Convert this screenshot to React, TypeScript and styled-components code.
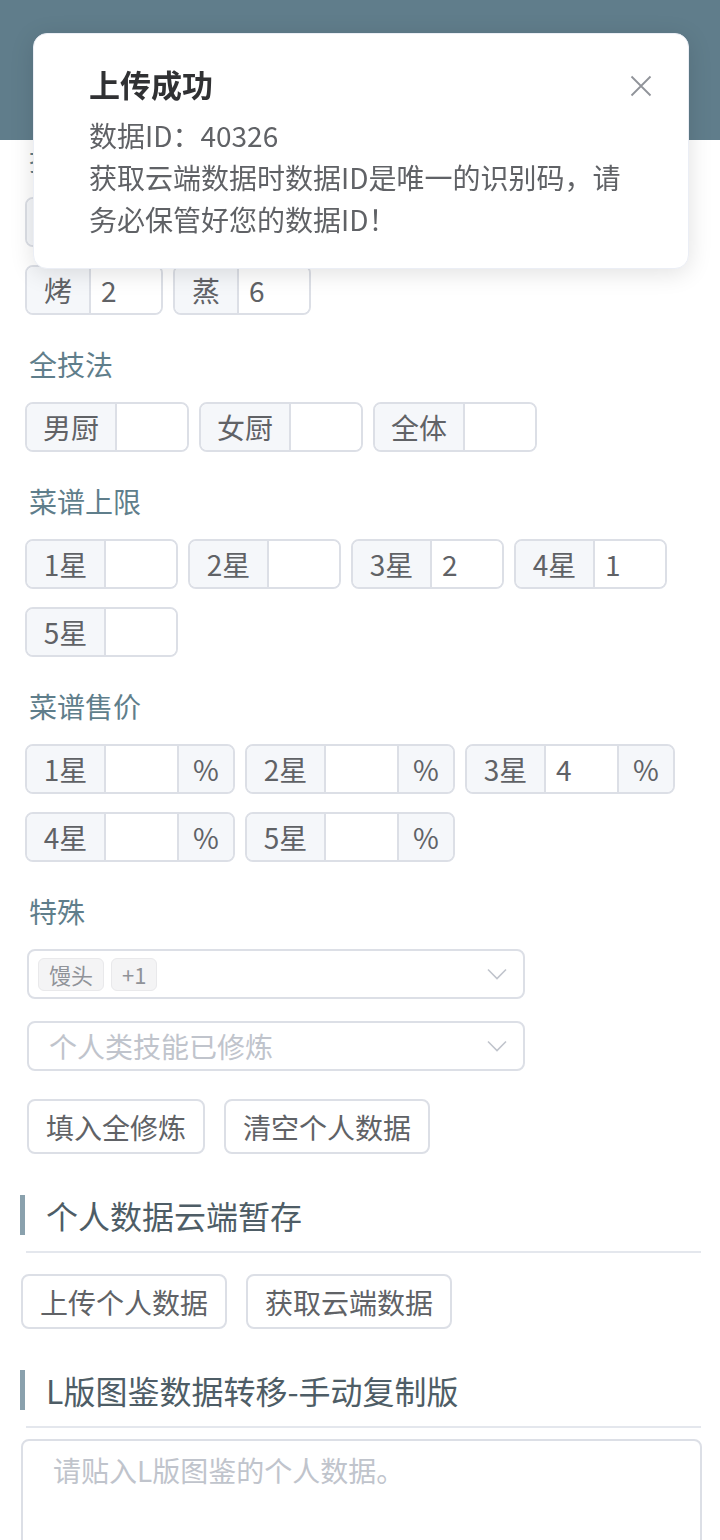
import React from "react";
import styled, { createGlobalStyle } from "styled-components";

const GlobalStyle = createGlobalStyle`
  body {
    margin: 0;
    background: #ffffff;
    font-family: "Noto Sans CJK SC", "Noto Sans", sans-serif;
    color: #606266;
  }
`;

type Field = { name: string; value?: string };

const skills: Field[] = [
  { name: "炒", value: "3" },
  { name: "煮", value: "1" },
  { name: "切", value: "4" },
  { name: "炸", value: "2" },
  { name: "烤", value: "2" },
  { name: "蒸", value: "6" },
];

const allSkills: Field[] = [{ name: "男厨" }, { name: "女厨" }, { name: "全体" }];

const limits: Field[] = [
  { name: "1星" },
  { name: "2星" },
  { name: "3星", value: "2" },
  { name: "4星", value: "1" },
  { name: "5星" },
];

const prices: Field[] = [
  { name: "1星" },
  { name: "2星" },
  { name: "3星", value: "4" },
  { name: "4星" },
  { name: "5星" },
];

const ChevronDown = () => (
  <svg width="20" height="12" viewBox="0 0 20 12" fill="none">
    <polyline points="1,1.5 10,10.5 19,1.5" stroke="#c0c4cc" strokeWidth="1.6" />
  </svg>
);

const CloseIcon = () => (
  <svg width="22" height="22" viewBox="0 0 22 22" fill="none">
    <path d="M1.5 1.5 L20.5 20.5 M20.5 1.5 L1.5 20.5" stroke="#909399" strokeWidth="1.8" />
  </svg>
);

const FieldRow = ({
  items,
  width,
  label,
  suffix,
}: {
  items: Field[];
  width: number;
  label: number;
  suffix?: string;
}) => (
  <Row>
    {items.map((s) => (
      <InputGroup key={s.name} $w={width}>
        <Prepend $w={label}>{s.name}</Prepend>
        <Input defaultValue={s.value} />
        {suffix && <Append>{suffix}</Append>}
      </InputGroup>
    ))}
  </Row>
);

const App = () => {
  return (
    <>
      <GlobalStyle />
      <Header />
      <Form>
        <Label $flush>技法</Label>
        <FieldRow items={skills} width={138} label={64} />

        <Label>全技法</Label>
        <FieldRow items={allSkills} width={164} label={90} />

        <Label>菜谱上限</Label>
        <FieldRow items={limits} width={153} label={79} />

        <Label>菜谱售价</Label>
        <FieldRow items={prices} width={210} label={79} suffix="%" />

        <Label>特殊</Label>
        <Select>
          <Tags>
            <Tag>馒头</Tag>
            <Tag>+1</Tag>
          </Tags>
          <ChevronDown />
        </Select>
        <Select $gap>
          <Placeholder>个人类技能已修炼</Placeholder>
          <ChevronDown />
        </Select>
        <ButtonBar $top={28}>
          <Button>填入全修炼</Button>
          <Button>清空个人数据</Button>
        </ButtonBar>
      </Form>

      <Section>
        <SectionTitle>个人数据云端暂存</SectionTitle>
        <Divider />
        <ButtonBar $top={21} $left={1}>
          <Button>上传个人数据</Button>
          <Button>获取云端数据</Button>
        </ButtonBar>
      </Section>

      <Section>
        <SectionTitle>L版图鉴数据转移-手动复制版</SectionTitle>
        <Divider />
        <TextArea placeholder="请贴入L版图鉴的个人数据。" />
      </Section>

      <Notification>
        <NotifyBody>
          <NotifyTitle>上传成功</NotifyTitle>
          <NotifyContent>
            <p>数据ID：40326</p>
            <p>
              获取云端数据时数据ID是唯一的识别码，请
              <br />
              务必保管好您的数据ID！
            </p>
          </NotifyContent>
        </NotifyBody>
        <CloseButton>
          <CloseIcon />
        </CloseButton>
      </Notification>
    </>
  );
};

export default App;

const Header = styled.div`
  height: 140px;
  background: #607d8b;
`;

const Form = styled.div`
  padding: 0 18px 0 25px;
`;

const Label = styled.div<{ $flush?: boolean }>`
  margin: ${(p) => (p.$flush ? "-1px" : "29px")} 0 18px 4px;
  height: 40px;
  line-height: 40px;
  font-size: 28px;
  color: #5f7e8b;
`;

const Row = styled.div`
  display: flex;
  flex-wrap: wrap;
  gap: 18px 10px;
`;

const InputGroup = styled.div<{ $w: number }>`
  display: flex;
  width: ${(p) => p.$w}px;
  height: 50px;
  box-sizing: border-box;
  border: 2px solid #dcdfe6;
  border-radius: 8px;
  overflow: hidden;
  font-size: 28px;
  color: #606266;
`;

const Prepend = styled.div<{ $w?: number }>`
  flex: none;
  width: ${(p) => p.$w ?? 56}px;
  box-sizing: border-box;
  display: flex;
  align-items: center;
  justify-content: center;
  background: #f5f7fa;
  border-right: 2px solid #dcdfe6;
`;

const Append = styled(Prepend)`
  border-right: none;
  border-left: 2px solid #dcdfe6;
`;

const Input = styled.input`
  flex: 1;
  min-width: 0;
  box-sizing: border-box;
  border: none;
  outline: none;
  padding: 0 10px;
  font: inherit;
  color: #606266;
  background: #ffffff;
`;

const Select = styled.div<{ $gap?: boolean }>`
  margin: ${(p) => (p.$gap ? "22px" : "0")} 0 0 2px;
  width: 498px;
  height: 50px;
  box-sizing: border-box;
  border: 2px solid #dcdfe6;
  border-radius: 8px;
  display: flex;
  align-items: center;
  justify-content: space-between;
  padding: 0 16px 0 9px;
`;

const Tags = styled.div`
  display: flex;
  gap: 7px;
`;

const Tag = styled.span`
  height: 33px;
  line-height: 31px;
  box-sizing: border-box;
  padding: 0 10px;
  font-size: 22px;
  color: #909399;
  background: #f4f4f5;
  border: 1px solid #e9e9eb;
  border-radius: 6px;
`;

const Placeholder = styled.span`
  padding-left: 11px;
  font-size: 28px;
  color: #c0c4cc;
`;

const ButtonBar = styled.div<{ $top: number; $left?: number }>`
  display: flex;
  gap: 19px;
  margin-top: ${(p) => p.$top}px;
  margin-left: ${(p) => p.$left ?? 2}px;
`;

const Button = styled.button`
  height: 55px;
  padding: 0 17px;
  background: #ffffff;
  border: 2px solid #dcdfe6;
  border-radius: 8px;
  font-family: inherit;
  font-size: 28px;
  color: #606266;
`;

const Section = styled.div`
  margin-top: 41px;
  padding: 0 19px 0 20px;
`;

const SectionTitle = styled.div`
  height: 40px;
  line-height: 40px;
  border-left: 5px solid #8aa1ad;
  padding-left: 21px;
  font-size: 32px;
  color: #4e5d66;
`;

const Divider = styled.div`
  height: 2px;
  margin: 16px 0 0 6px;
  background: #e4e7ed;
`;

const TextArea = styled.textarea`
  display: block;
  width: 100%;
  height: 170px;
  box-sizing: border-box;
  margin: 11px 0 0 1px;
  padding: 8px 30px;
  border: 2px solid #dcdfe6;
  border-radius: 8px;
  resize: none;
  font-family: inherit;
  font-size: 28px;
  line-height: 42px;
  color: #606266;
  outline: none;

  &::placeholder {
    color: #c0c4cc;
  }
`;

const Notification = styled.div`
  position: fixed;
  top: 33px;
  left: 33px;
  width: 656px;
  box-sizing: border-box;
  display: flex;
  justify-content: space-between;
  padding: 28px 36px 28px 55px;
  background: #ffffff;
  border: 1px solid #ebeef5;
  border-radius: 14px;
  box-shadow: 0 4px 24px rgba(0, 0, 0, 0.12);
`;

const NotifyBody = styled.div`
  display: flex;
  flex-direction: column;
`;

const NotifyTitle = styled.div`
  height: 44px;
  line-height: 44px;
  font-size: 31px;
  font-weight: 700;
  color: #303133;
`;

const NotifyContent = styled.div`
  margin-top: 8px;
  font-size: 28px;
  line-height: 42px;
  color: #606266;

  p {
    margin: 0;
  }
`;

const CloseButton = styled.div`
  margin-top: 13px;
  height: 22px;
`;
